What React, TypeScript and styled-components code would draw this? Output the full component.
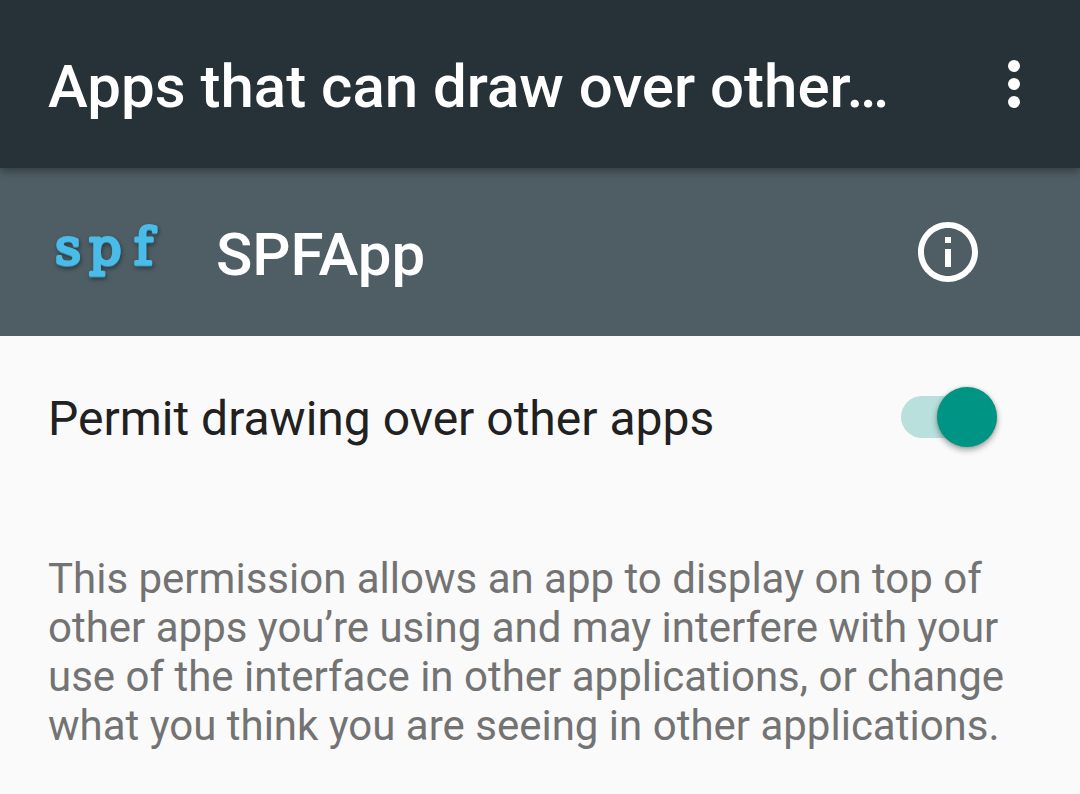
import React, { useState } from "react";
import styled, { createGlobalStyle } from "styled-components";

const GlobalStyle = createGlobalStyle`
  * { box-sizing: border-box; }
  body {
    margin: 0;
    background: #fafafa;
    font-family: Roboto, "Liberation Sans", sans-serif;
  }
`;

const Toolbar = styled.header`
  position: relative;
  z-index: 1;
  display: flex;
  align-items: center;
  justify-content: space-between;
  height: 168px;
  padding: 0 30px 0 48px;
  background: #263238;
  color: #fff;
  box-shadow: 0 3px 9px rgba(0, 0, 0, 0.38);
`;

const Title = styled.h1`
  margin: 0;
  padding-top: 6px;
  font-size: 60px;
  line-height: 72px;
  font-weight: 500;
  white-space: nowrap;
`;

const IconButton = styled.button`
  display: flex;
  padding: 0;
  border: 0;
  background: none;
  color: #fff;
  cursor: pointer;
`;

const AppHeader = styled.section`
  display: flex;
  align-items: center;
  height: 168px;
  padding: 0 96px 0 48px;
  background: #4f5e65;
  color: #fff;
`;

const AppLogo = styled.svg`
  flex: none;
  width: 120px;
  height: 120px;
  margin-right: 48px;
  fill: #4bbbe8;
  stroke: #4bbbe8;
  stroke-width: 3px;
  stroke-linejoin: round;
  font-family: "DejaVu Serif", serif;
  font-size: 51px;
  filter: drop-shadow(0 1px 0 #2e8fb5) drop-shadow(1px 2px 2px rgba(0, 0, 0, 0.4));
`;

const AppName = styled.h2`
  flex: 1;
  margin: 0;
  padding-top: 6px;
  font-size: 60px;
  line-height: 72px;
  font-weight: 500;
`;

const PermissionRow = styled.label`
  display: flex;
  align-items: center;
  justify-content: space-between;
  height: 162px;
  padding: 0 83px 0 48px;
  color: #212121;
  font-size: 48px;
  line-height: 56px;
  cursor: pointer;
`;

const PermissionText = styled.span`
  padding-top: 3px;
`;

const Switch = styled.input`
  appearance: none;
  display: flex;
  align-items: center;
  width: 96px;
  height: 42px;
  margin: 0;
  border-radius: 21px;
  background: #bdbdbd;
  cursor: pointer;

  &::before {
    content: "";
    width: 60px;
    height: 60px;
    flex: none;
    border-radius: 50%;
    background: #f1f1f1;
    box-shadow: 0 3px 6px rgba(0, 0, 0, 0.36), 0 0 3px rgba(0, 0, 0, 0.14);
  }

  &:checked {
    justify-content: flex-end;
    background: #b9e0dc;
  }

  &:checked::before {
    background: #009485;
  }
`;

const Description = styled.p`
  margin: 0;
  padding: 56px 48px 44px;
  color: #737373;
  font-size: 42px;
  line-height: 49px;
`;

export default function App() {
  const [permitted, setPermitted] = useState(true);
  return (
    <>
      <GlobalStyle />
      <Toolbar>
        <Title>Apps that can draw over other…</Title>
        <IconButton aria-label="More options">
          <svg width="72" height="72" viewBox="0 0 24 24" fill="currentColor">
            <circle cx="12" cy="6" r="2" />
            <circle cx="12" cy="12" r="2" />
            <circle cx="12" cy="18" r="2" />
          </svg>
        </IconButton>
      </Toolbar>
      <main>
        <AppHeader>
          <AppLogo viewBox="0 0 120 120">
            <text x="7 41 86" y="72">
              spf
            </text>
          </AppLogo>
          <AppName>SPFApp</AppName>
          <IconButton aria-label="App info">
            <svg width="72" height="72" viewBox="0 0 24 24" fill="currentColor">
              <path d="M11 17h2v-6h-2v6zm1-15C6.480 2 2 6.480 2 12s4.480 10 10 10 10-4.480 10-10S17.520 2 12 2zm0 18c-4.410 0-8-3.590-8-8s3.590-8 8-8 8 3.590 8 8-3.590 8-8 8zM11 9h2V7h-2v2z" />
            </svg>
          </IconButton>
        </AppHeader>
        <PermissionRow>
          <PermissionText>Permit drawing over other apps</PermissionText>
          <Switch
            type="checkbox"
            role="switch"
            checked={permitted}
            onChange={(e) => setPermitted(e.target.checked)}
          />
        </PermissionRow>
        <Description>
          This permission allows an app to display on top of other apps you’re
          using and may interfere with your use of the interface in other
          applications, or change what you think you are seeing in other
          applications.
        </Description>
      </main>
    </>
  );
}
